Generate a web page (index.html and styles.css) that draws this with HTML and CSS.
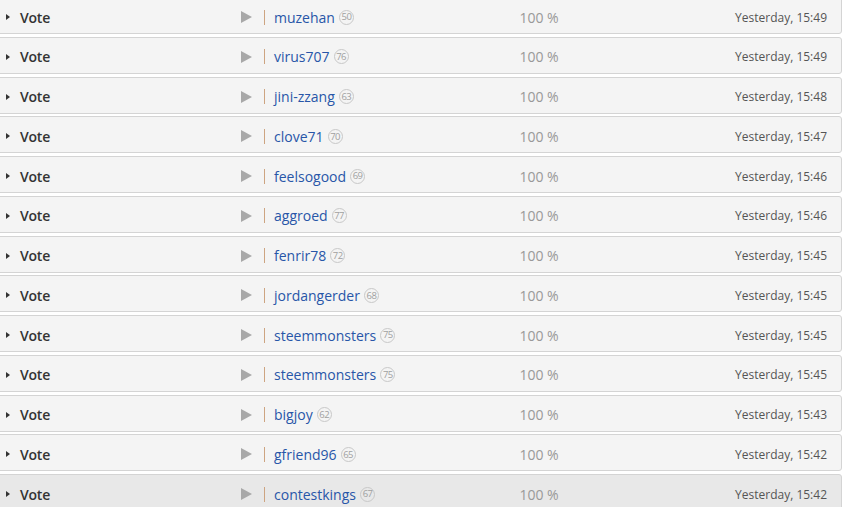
FILE: index.html
```html
<!DOCTYPE html>
<html>
<head>
<meta charset="utf-8">
<link rel="stylesheet" href="styles.css">
</head>
<body>
<div class="list">
  <div class="row"><div class="vote"><span class="caret"></span><b>Vote</b></div><span class="play"></span><span class="sep"></span><div class="who"><a>muzehan</a><span class="rep">50</span></div><div class="pct">100 %</div><div class="date">Yesterday, 15:49</div></div>
  <div class="row"><div class="vote"><span class="caret"></span><b>Vote</b></div><span class="play"></span><span class="sep"></span><div class="who"><a>virus707</a><span class="rep">76</span></div><div class="pct">100 %</div><div class="date">Yesterday, 15:49</div></div>
  <div class="row"><div class="vote"><span class="caret"></span><b>Vote</b></div><span class="play"></span><span class="sep"></span><div class="who"><a>jini-zzang</a><span class="rep">63</span></div><div class="pct">100 %</div><div class="date">Yesterday, 15:48</div></div>
  <div class="row"><div class="vote"><span class="caret"></span><b>Vote</b></div><span class="play"></span><span class="sep"></span><div class="who"><a>clove71</a><span class="rep">70</span></div><div class="pct">100 %</div><div class="date">Yesterday, 15:47</div></div>
  <div class="row"><div class="vote"><span class="caret"></span><b>Vote</b></div><span class="play"></span><span class="sep"></span><div class="who"><a>feelsogood</a><span class="rep">69</span></div><div class="pct">100 %</div><div class="date">Yesterday, 15:46</div></div>
  <div class="row"><div class="vote"><span class="caret"></span><b>Vote</b></div><span class="play"></span><span class="sep"></span><div class="who"><a>aggroed</a><span class="rep">77</span></div><div class="pct">100 %</div><div class="date">Yesterday, 15:46</div></div>
  <div class="row"><div class="vote"><span class="caret"></span><b>Vote</b></div><span class="play"></span><span class="sep"></span><div class="who"><a>fenrir78</a><span class="rep">72</span></div><div class="pct">100 %</div><div class="date">Yesterday, 15:45</div></div>
  <div class="row"><div class="vote"><span class="caret"></span><b>Vote</b></div><span class="play"></span><span class="sep"></span><div class="who"><a>jordangerder</a><span class="rep">68</span></div><div class="pct">100 %</div><div class="date">Yesterday, 15:45</div></div>
  <div class="row"><div class="vote"><span class="caret"></span><b>Vote</b></div><span class="play"></span><span class="sep"></span><div class="who"><a>steemmonsters</a><span class="rep">75</span></div><div class="pct">100 %</div><div class="date">Yesterday, 15:45</div></div>
  <div class="row"><div class="vote"><span class="caret"></span><b>Vote</b></div><span class="play"></span><span class="sep"></span><div class="who"><a>steemmonsters</a><span class="rep">75</span></div><div class="pct">100 %</div><div class="date">Yesterday, 15:45</div></div>
  <div class="row"><div class="vote"><span class="caret"></span><b>Vote</b></div><span class="play"></span><span class="sep"></span><div class="who"><a>bigjoy</a><span class="rep">62</span></div><div class="pct">100 %</div><div class="date">Yesterday, 15:43</div></div>
  <div class="row"><div class="vote"><span class="caret"></span><b>Vote</b></div><span class="play"></span><span class="sep"></span><div class="who"><a>gfriend96</a><span class="rep">65</span></div><div class="pct">100 %</div><div class="date">Yesterday, 15:42</div></div>
  <div class="row hover"><div class="vote"><span class="caret"></span><b>Vote</b></div><span class="play"></span><span class="sep"></span><div class="who"><a>contestkings</a><span class="rep">67</span></div><div class="pct">100 %</div><div class="date">Yesterday, 15:42</div></div>
</div>
</body>
</html>
```

FILE: styles.css
```css
html, body {
  margin: 0;
  padding: 0;
  background: #fff;
  overflow: hidden;
}
body {
  font-family: "Open Sans", "Liberation Sans", sans-serif;
  font-size: 14px;
  color: #333;
}
.list {
  margin-top: -3px;
  margin-left: -5px;
  width: 847px;
  display: flex;
  flex-direction: column;
  gap: 2.75px;
}
.row {
  box-sizing: border-box;
  height: 37px;
  border: 1px solid #d4d4d4;
  border-radius: 3px;
  background: #f4f4f4;
  display: flex;
  align-items: center;
  padding-top: 3px;
}
.row.hover {
  background: #e8e8e8;
}
.vote {
  width: 245px;
  display: flex;
  align-items: center;
  padding-left: 10px;
  box-sizing: border-box;
}
.caret {
  width: 0;
  height: 0;
  border-top: 3.5px solid transparent;
  border-bottom: 3.5px solid transparent;
  border-left: 4px solid #333;
  margin-right: 10px;
}
.vote b {
  font-weight: 600;
  font-size: 14px;
  color: #333;
  letter-spacing: -0.2px;
}
.play {
  width: 0;
  height: 0;
  border-top: 6px solid transparent;
  border-bottom: 6px solid transparent;
  border-left: 11px solid #a8a8a8;
}
.sep {
  margin-left: 12px;
  width: 1px;
  height: 15px;
  background: #cda481;
  margin-right: 9px;
}
.who {
  width: 226px;
  display: flex;
  align-items: center;
}
.who a {
  color: #2856a8;
}
.rep {
  margin-left: 4px;
  box-sizing: border-box;
  width: 15px;
  height: 15px;
  border: 1px solid #c8c8c8;
  border-radius: 50%;
  font-size: 9.5px;
  letter-spacing: -0.6px;
  color: #a0a0a0;
  display: flex;
  align-items: center;
  justify-content: center;
  line-height: 1;
}
.pct {
  width: 78px;
  text-align: center;
  color: #999;
}
.date {
  margin-left: auto;
  padding-right: 14px;
  font-size: 12px;
  color: #555;
}
```
